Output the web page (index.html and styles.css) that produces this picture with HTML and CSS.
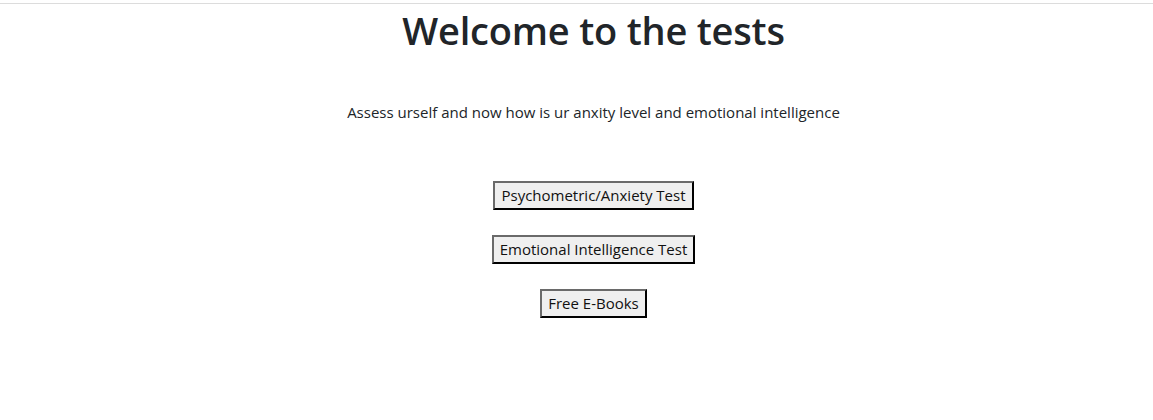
FILE: index.html
```html
<!DOCTYPE html>
<html>
<head>
<meta charset="utf-8">
<link rel="stylesheet" href="styles.css">
</head>
<body>
<div class="topline"></div>
<main class="page">
  <h1 class="title">Welcome to the tests</h1>
  <p class="lead">Assess urself and now how is ur anxity level and emotional intelligence</p>
  <div class="actions">
    <button class="btn">Psychometric/Anxiety Test</button>
    <button class="btn">Emotional Intelligence Test</button>
    <button class="btn">Free E-Books</button>
  </div>
</main>
</body>
</html>
```
FILE: styles.css
```css
html, body {
  margin: 0;
  padding: 0;
  background: #fff;
}
body {
  font-family: "Open Sans", "Noto Sans", sans-serif;
  color: #212529;
}
.topline {
  margin-top: 3px;
  height: 1px;
  background: #dcdcdc;
}
.page {
  display: flex;
  flex-direction: column;
  align-items: center;
  padding-left: 34px;
}
.title {
  margin: 0;
  font-size: 38px;
  font-weight: 600;
  line-height: 52px;
  letter-spacing: -0.2px;
}
.lead {
  margin: 44px 0 0;
  font-size: 15px;
  line-height: 24px;
}
.actions {
  margin-top: 57px;
  display: flex;
  flex-direction: column;
  align-items: center;
  gap: 25px;
}
.btn {
  font-family: "Open Sans", "Noto Sans", sans-serif;
  font-size: 15px;
  line-height: 23px;
  color: #111;
  background: #efefef;
  border: 2px outset #767676;
  border-top-color: #6a6a6a;
  border-left-color: #6a6a6a;
  border-right-color: #333;
  border-bottom-color: #333;
  padding: 1px 6px;
}
```
